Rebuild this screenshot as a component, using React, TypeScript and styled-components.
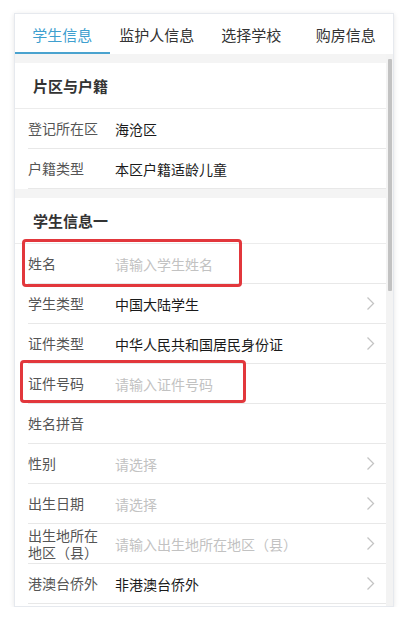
import styled, { createGlobalStyle } from "styled-components";

const GlobalStyle = createGlobalStyle`
  html, body {
    margin: 0;
    padding: 0;
    background: #ffffff;
    font-family: "Noto Sans CJK SC", "Noto Sans", sans-serif;
  }
  * { box-sizing: border-box; }
`;

export const Page = styled.div`
  padding: 13px 12px 0 14px;
`;

export const Card = styled.div`
  width: 380px;
  height: 594px;
  display: flex;
  flex-direction: column;
  background: #fff;
  border: 1px solid #e6e9ee;
  box-shadow: 0 1px 5px rgba(0, 0, 0, 0.1);
`;

export const TabBar = styled.div`
  display: flex;
  height: 40px;
  flex-shrink: 0;
`;

export const Tab = styled.div<{ active?: boolean }>`
  flex: 1;
  display: flex;
  align-items: center;
  justify-content: center;
  font-size: 15px;
  color: ${(p) => (p.active ? "#3f9fcf" : "#333")};
  border-bottom: 2px solid ${(p) => (p.active ? "#4aa3cf" : "transparent")};
  padding-top: 2px;
`;

export const Body = styled.div`
  flex: 1;
  display: flex;
  min-height: 0;
`;

export const Content = styled.div`
  flex: 1;
  overflow: hidden;
`;

export const ScrollTrack = styled.div`
  width: 7px;
  flex-shrink: 0;
  background: #f3f3f3;
  padding: 5px 1.5px 0;
`;

export const ScrollThumb = styled.div<{ $h: number }>`
  height: ${(p) => p.$h}px;
  background: #c2c2c2;
  border-radius: 1px;
`;

export const Section = styled.div`
  border-top: 9px solid #f4f4f4;
`;

export const SectionTitle = styled.div`
  height: 46px;
  display: flex;
  align-items: center;
  padding-left: 18px;
  font-size: 15px;
  font-weight: 700;
  color: #333;
  border-bottom: 1px solid #ececec;
`;

export const Row = styled.div`
  position: relative;
  height: 40px;
  margin-left: 13px;
  padding-right: 11px;
  display: flex;
  align-items: center;
  border-bottom: 1px solid #e8e8e8;
  font-size: 14px;
`;

export const Label = styled.div`
  width: 76px;
  margin-right: 11px;
  flex-shrink: 0;
  color: #555;
  line-height: 17px;
`;

export const Value = styled.div<{ placeholder?: boolean }>`
  flex: 1;
  color: ${(p) => (p.placeholder ? "#c2c2c2" : "#1a1a1a")};
  white-space: nowrap;
`;

export const Highlight = styled.div<{ $l: number; $t: number; $w: number; $h: number }>`
  position: absolute;
  left: ${(p) => p.$l}px;
  top: ${(p) => p.$t}px;
  width: ${(p) => p.$w}px;
  height: ${(p) => p.$h}px;
  border: 3px solid #e2373c;
  border-radius: 4px;
  pointer-events: none;
`;

const Chevron = () => (
  <svg width="9" height="15" viewBox="0 0 9 15">
    <polyline points="1.5,1.5 7.5,7.5 1.5,13.5" fill="none" stroke="#c4c4c4" strokeWidth="1.3" />
  </svg>
);

type Field = {
  label: string;
  value?: string;
  placeholder?: string;
  arrow?: boolean;
  box?: { l: number; t: number; w: number; h: number };
};

const sections: { title: string; fields: Field[] }[] = [
  {
    title: "片区与户籍",
    fields: [
      { label: "登记所在区", value: "海沧区" },
      { label: "户籍类型", value: "本区户籍适龄儿童" },
    ],
  },
  {
    title: "学生信息一",
    fields: [
      { label: "姓名", placeholder: "请输入学生姓名", box: { l: -6, t: -5, w: 220, h: 48 } },
      { label: "学生类型", value: "中国大陆学生", arrow: true },
      { label: "证件类型", value: "中华人民共和国居民身份证", arrow: true },
      { label: "证件号码", placeholder: "请输入证件号码", box: { l: -8, t: -4, w: 226, h: 43 } },
      { label: "姓名拼音" },
      { label: "性别", placeholder: "请选择", arrow: true },
      { label: "出生日期", placeholder: "请选择", arrow: true },
      { label: "出生地所在地区（县）", placeholder: "请输入出生地所在地区（县）", arrow: true },
      { label: "港澳台侨外", value: "非港澳台侨外", arrow: true },
    ],
  },
];

export default function App() {
  return (
    <>
      <GlobalStyle />
      <Page>
        <Card>
          <TabBar>
            <Tab active>学生信息</Tab>
            <Tab>监护人信息</Tab>
            <Tab>选择学校</Tab>
            <Tab>购房信息</Tab>
          </TabBar>
          <Body>
            <Content>
              {sections.map((s) => (
                <Section key={s.title}>
                  <SectionTitle>{s.title}</SectionTitle>
                  {s.fields.map((f) => (
                    <Row key={f.label}>
                      <Label>{f.label}</Label>
                      <Value placeholder={!f.value}>{f.value ?? f.placeholder}</Value>
                      {f.arrow && <Chevron />}
                      {f.box && <Highlight $l={f.box.l} $t={f.box.t} $w={f.box.w} $h={f.box.h} />}
                    </Row>
                  ))}
                </Section>
              ))}
            </Content>
            <ScrollTrack>
              <ScrollThumb $h={232} />
            </ScrollTrack>
          </Body>
        </Card>
      </Page>
    </>
  );
}
